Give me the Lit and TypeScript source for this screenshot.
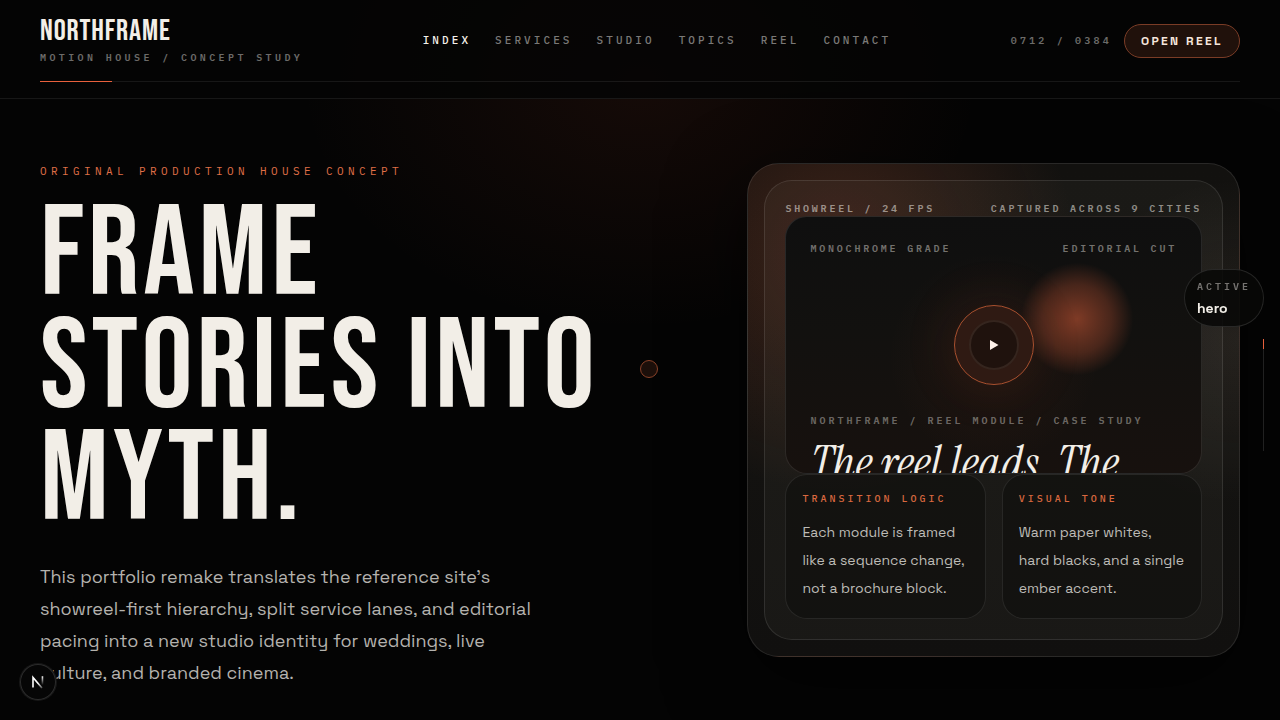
import { LitElement, html, css, svg } from "lit";

const NAV = ["Index", "Services", "Studio", "Topics", "Reel", "Contact"];
const NOTES = [
  {
    label: "Transition logic",
    text: "Each module is framed like a sequence change, not a brochure block.",
  },
  {
    label: "Visual tone",
    text: "Warm paper whites, hard blacks, and a single ember accent.",
  },
];

const playIcon = svg`<svg class="play-icon" viewBox="0 0 10 12" aria-hidden="true"><path d="M1 1 L9.5 6 L1 11 Z" fill="currentColor"/></svg>`;

class SiteHeader extends LitElement {
  static styles = css`
    :host {
      display: block;
      position: relative;
      z-index: 2;
      padding: 16px 40px;
      border-bottom: 1px solid rgba(255, 255, 255, 0.08);
      background: rgba(5, 5, 5, 0.86);
    }
    .row {
      display: flex;
      justify-content: space-between;
      align-items: center;
    }
    .brand {
      display: grid;
      gap: 4px;
      color: inherit;
      text-decoration: none;
    }
    .name {
      font: 400 30px/30px "Bebas Neue", "Liberation Sans Narrow", sans-serif;
      letter-spacing: 0.03em;
    }
    .tag,
    .code {
      font: 600 10px/15px "IBM Plex Mono", "Liberation Mono", monospace;
      text-transform: uppercase;
      color: #6c6b69;
    }
    .tag {
      letter-spacing: 0.34em;
    }
    .code {
      letter-spacing: 0.32em;
    }
    nav {
      display: flex;
      gap: 24px;
    }
    nav a {
      font: 500 11px/17px "IBM Plex Mono", "Liberation Mono", monospace;
      letter-spacing: 0.28em;
      text-transform: uppercase;
      text-decoration: none;
      color: #7a7977;
    }
    nav a.current {
      color: #f5f1ea;
    }
    .actions {
      display: flex;
      align-items: center;
      gap: 12px;
    }
    button {
      height: 34px;
      padding: 0 16px;
      border: 1px solid #7a3c26;
      border-radius: 17px;
      background: #20110b;
      color: #f5e6dc;
      font: 700 12px/16px "Space Grotesk", Inter, sans-serif;
      letter-spacing: 0.2em;
      text-transform: uppercase;
    }
    .track {
      margin-top: 16px;
      height: 1px;
      background: rgba(255, 255, 255, 0.08);
    }
    .track-fill {
      width: 72px;
      height: 1px;
      background: #e8603c;
    }
  `;
  render() {
    return html`
      <div class="row">
        <a class="brand" href="#top">
          <span class="name">NORTHFRAME</span>
          <span class="tag">Motion house / Concept study</span>
        </a>
        <nav aria-label="Main">
          ${NAV.map(
            (item, i) =>
              html`<a class=${i === 0 ? "current" : ""} href="#${item.toLowerCase()}">${item}</a>`
          )}
        </nav>
        <div class="actions">
          <span class="code">0712 / 0384</span>
          <button type="button">Open Reel</button>
        </div>
      </div>
      <div class="track"><div class="track-fill"></div></div>
    `;
  }
}
customElements.define("site-header", SiteHeader);

class ReelCard extends LitElement {
  static styles = css`
    :host {
      display: block;
      padding: 16px;
      border: 1px solid rgba(255, 255, 255, 0.1);
      border-radius: 32px;
      background:
        radial-gradient(circle at 18% 18%, rgba(226, 98, 58, 0.2), transparent 42%),
        radial-gradient(circle at 100% 36%, rgba(255, 220, 195, 0.08), transparent 28%),
        linear-gradient(180deg, #12110f, #131210 60%, #11100f);
      box-shadow: 0 24px 80px rgba(0, 0, 0, 0.6);
    }
    .inner {
      padding: 20px;
      border: 1px solid rgba(255, 255, 255, 0.1);
      border-radius: 28px;
      background: rgba(255, 248, 240, 0.035);
    }
    .labels {
      display: flex;
      justify-content: space-between;
      font: 600 10px/15px "IBM Plex Mono", "Liberation Mono", monospace;
      letter-spacing: 0.28em;
      text-transform: uppercase;
      color: rgba(245, 241, 234, 0.54);
    }
    .frame {
      position: relative;
      box-sizing: border-box;
      height: 258px;
      padding: 24px;
      overflow: hidden;
      border: 1px solid rgba(255, 255, 255, 0.1);
      border-radius: 22px;
      display: flex;
      flex-direction: column;
      justify-content: space-between;
      background:
        radial-gradient(circle at 50% 55%, rgba(200, 80, 40, 0.07), transparent 42%),
        linear-gradient(180deg, #0f0f0f 0%, #12110f 45%, #17110e 100%);
    }
    .frame .labels {
      color: rgba(245, 241, 234, 0.44);
    }
    .orb {
      position: absolute;
      top: 26px;
      right: 48px;
      width: 152px;
      height: 152px;
      border-radius: 50%;
      background: radial-gradient(circle closest-side, rgba(214, 92, 56, 0.55), rgba(214, 92, 56, 0.28) 45%, transparent 74%);
    }
    .play {
      position: absolute;
      inset: 0;
      margin: auto;
      width: 80px;
      height: 80px;
      padding: 0;
      display: grid;
      place-items: center;
      border: 1px solid #a8502f;
      border-radius: 50%;
      background: #2f1a13;
      box-shadow: 0 0 60px rgba(214, 92, 56, 0.1);
      color: #fff2ea;
    }
    .play-core {
      box-sizing: border-box;
      width: 50px;
      height: 50px;
      display: grid;
      place-items: center;
      border: 2px solid #35251e;
      border-radius: 50%;
      background: #1f120d;
    }
    .play-icon {
      width: 10px;
      height: 12px;
    }
    .caption {
      flex: none;
      height: 36px;
    }
    .slug {
      margin: 0 0 12px;
      font: 600 10px/15px "IBM Plex Mono", "Liberation Mono", monospace;
      letter-spacing: 0.3em;
      text-transform: uppercase;
      color: rgba(245, 241, 234, 0.4);
    }
    .title {
      margin: 0;
      font: italic 400 48px/48px "Instrument Serif", "Liberation Serif", serif;
      color: #f2eee7;
    }
    .notes {
      display: grid;
      grid-template-columns: 1fr 1fr;
      gap: 16px;
    }
    .note {
      padding: 16px;
      border: 1px solid rgba(255, 255, 255, 0.09);
      border-radius: 22px;
      background: rgba(12, 11, 10, 0.5);
    }
    .note h3 {
      margin: 0 0 12px;
      font: 500 10px/15px "IBM Plex Mono", "Liberation Mono", monospace;
      letter-spacing: 0.3em;
      text-transform: uppercase;
      color: #d9683f;
    }
    .note p {
      margin: 0;
      font-size: 14px;
      line-height: 28px;
      color: #bdbbb6;
    }
  `;
  render() {
    return html`
      <div class="inner">
        <div class="labels"><span>Showreel / 24 fps</span><span>Captured across 9 cities</span></div>
        <div class="frame">
          <div class="orb"></div>
          <div class="labels"><span>Monochrome grade</span><span>Editorial cut</span></div>
          <button class="play" type="button" aria-label="Play">
            <span class="play-core">${playIcon}</span>
          </button>
          <div class="caption">
            <p class="slug">Northframe / Reel module / Case study</p>
            <p class="title">The reel leads. The</p>
          </div>
        </div>
        <div class="notes">
          ${NOTES.map((n) => html`<section class="note"><h3>${n.label}</h3><p>${n.text}</p></section>`)}
        </div>
      </div>
    `;
  }
}
customElements.define("reel-card", ReelCard);

class AppRoot extends LitElement {
  static styles = css`
    :host {
      display: block;
      position: relative;
      height: 100vh;
      overflow: hidden;
      color: #f2eee7;
      font-family: "Space Grotesk", Inter, sans-serif;
      background:
        radial-gradient(ellipse 340px 250px at 50% 80px, rgba(200, 76, 44, 0.09), transparent),
        #040404;
    }
    .hero {
      display: grid;
      grid-template-columns: 1.355fr 1fr;
      gap: 40px;
      align-items: start;
      padding: 64px 40px;
    }
    .eyebrow {
      margin: 0 0 20px;
      font: 400 11px/17px "IBM Plex Mono", "Liberation Mono", monospace;
      letter-spacing: 0.4em;
      text-transform: uppercase;
      color: #e07048;
    }
    h1 {
      margin: 0 0 23px;
      max-width: 600px;
      font: 400 128px/0.88 "Bebas Neue", "Liberation Sans Narrow", sans-serif;
      letter-spacing: 0.03em;
      text-transform: uppercase;
    }
    .lead {
      margin: 0;
      max-width: 512px;
      font-size: 18px;
      line-height: 32px;
      color: #b4b2ae;
    }
    .status {
      position: fixed;
      z-index: 3;
      top: 50%;
      right: 16px;
      transform: translateY(-50%);
      display: grid;
      justify-items: end;
      gap: 12px;
    }
    .badge {
      padding: 8px 12px;
      border: 1px solid rgba(255, 255, 255, 0.12);
      border-radius: 29px;
      background: rgba(8, 8, 7, 0.88);
    }
    .badge-label {
      font: 600 10px/18px "IBM Plex Mono", "Liberation Mono", monospace;
      letter-spacing: 0.3em;
      text-transform: uppercase;
      color: #757370;
    }
    .badge-value {
      margin-top: 2px;
      font-size: 14px;
      font-weight: 700;
      line-height: 20px;
    }
    .rail {
      width: 1px;
      height: 112px;
      background: rgba(255, 255, 255, 0.12);
    }
    .rail-fill {
      height: 10px;
      background: #e8603c;
    }
    .cursor {
      position: fixed;
      z-index: 3;
      top: 50%;
      left: 50%;
      box-sizing: border-box;
      width: 18px;
      height: 18px;
      border: 1px solid #8a4229;
      border-radius: 50%;
      background: #1c0f0a;
    }
    .dev {
      position: fixed;
      z-index: 3;
      left: 20px;
      bottom: 20px;
      box-sizing: border-box;
      width: 36px;
      height: 36px;
      padding: 0;
      display: grid;
      place-items: center;
      border: 0;
      border-radius: 50%;
      background: #060606;
      box-shadow: 0 0 0 1px #171717, inset 0 0 0 1px #2c2c2c;
    }
    .dev svg {
      width: 14px;
      height: 14px;
    }
  `;
  render() {
    return html`
      <site-header></site-header>
      <main class="hero">
        <div>
          <p class="eyebrow">Original production house concept</p>
          <h1>Frame stories into myth.</h1>
          <p class="lead">
            This portfolio remake translates the reference site’s showreel-first hierarchy, split
            service lanes, and editorial pacing into a new studio identity for weddings, live
            culture, and branded cinema.
          </p>
        </div>
        <reel-card></reel-card>
      </main>
      <aside class="status">
        <div class="badge">
          <div class="badge-label">Active</div>
          <div class="badge-value">hero</div>
        </div>
        <div class="rail"><div class="rail-fill"></div></div>
      </aside>
      <div class="cursor"></div>
      <button class="dev" type="button" aria-label="Developer tools">
        <svg viewBox="0 0 14 14" fill="none" aria-hidden="true">
          <defs>
            <linearGradient id="diag" x1="7" y1="8" x2="12" y2="14" gradientUnits="userSpaceOnUse">
              <stop offset="0" stop-color="#fff" />
              <stop offset="1" stop-color="#fff" stop-opacity="0.15" />
            </linearGradient>
            <linearGradient id="stem" x1="0" y1="1" x2="0" y2="10" gradientUnits="userSpaceOnUse">
              <stop offset="0" stop-color="#fff" />
              <stop offset="1" stop-color="#fff" stop-opacity="0" />
            </linearGradient>
          </defs>
          <path d="M2 12.5 V2.5 L11 13" stroke="url(#diag)" stroke-width="1.6" />
          <path d="M11.5 2 V9.9 H11.4 V2 Z" stroke="url(#stem)" stroke-width="1.5" />
        </svg>
      </button>
    `;
  }
}
customElements.define("app-root", AppRoot);
